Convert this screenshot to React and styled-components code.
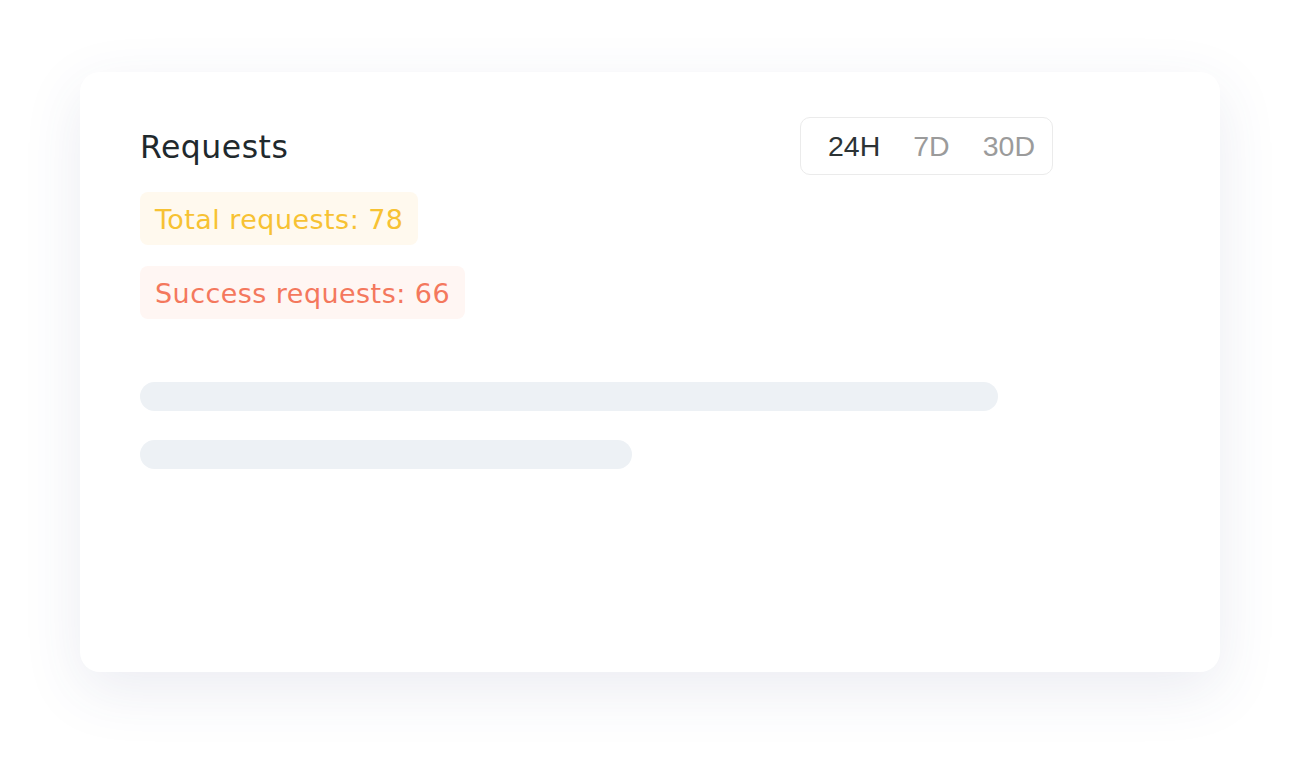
import React from 'react';
import styled, { createGlobalStyle } from 'styled-components';

const GlobalStyle = createGlobalStyle`
  body {
    margin: 0;
    background: #ffffff;
    font-family: "DejaVu Sans", "Open Sans", sans-serif;
  }
`;

const Page = styled.div`
  width: 1300px;
  height: 760px;
  padding: 72px 80px;
  box-sizing: border-box;
`;

const Card = styled.div`
  width: 1140px;
  height: 600px;
  box-sizing: border-box;
  padding: 45px 60px;
  background: #fff;
  border-radius: 20px;
  box-shadow: 0 18px 60px rgba(60, 70, 130, 0.1);
`;

const Header = styled.div`
  width: 913px;
  display: flex;
  align-items: center;
  justify-content: space-between;
`;

const Title = styled.h2`
  margin: 0;
  padding-top: 2px;
  font-size: 31.5px;
  font-weight: 400;
  letter-spacing: 0.5px;
  color: #1f292d;
`;

const Tabs = styled.div`
  display: flex;
  align-items: center;
  gap: 33px;
  height: 58px;
  box-sizing: border-box;
  padding: 0 17px 0 27px;
  border: 1px solid #ebebeb;
  border-radius: 10px;
`;

const Tab = styled.span`
  font-family: "Liberation Sans", Arial, sans-serif;
  font-size: 28.5px;
  color: ${p => (p.active ? '#2c3335' : '#9b9b9b')};
`;

const Stats = styled.div`
  margin-top: 17px;
  display: flex;
  flex-direction: column;
  align-items: flex-start;
  gap: 21px;
`;

const Chip = styled.div`
  height: 53px;
  display: flex;
  align-items: center;
  padding: 1px 15px 0;
  box-sizing: border-box;
  border-radius: 8px;
  font-size: 27px;
  letter-spacing: 0.45px;
  background: ${p => p.bg};
  color: ${p => p.fg};
`;

const Bars = styled.div`
  margin-top: 63px;
  display: flex;
  flex-direction: column;
  gap: 29px;
`;

const Bar = styled.div`
  height: 29px;
  border-radius: 15px;
  background: #edf1f5;
`;

const tabs = ['24H', '7D', '30D'];

export default function App() {
  return (
    <>
      <GlobalStyle />
      <Page>
        <Card>
          <Header>
            <Title>Requests</Title>
            <Tabs>
              {tabs.map((t, i) => (
                <Tab key={t} active={i === 0}>{t}</Tab>
              ))}
            </Tabs>
          </Header>
          <Stats>
            <Chip bg="#fff9ee" fg="#f7c233">Total requests: 78</Chip>
            <Chip bg="#fff6f3" fg="#f4785d">Success requests: 66</Chip>
          </Stats>
          <Bars>
            <Bar style={{ width: 858 }} />
            <Bar style={{ width: 492 }} />
          </Bars>
        </Card>
      </Page>
    </>
  );
}
